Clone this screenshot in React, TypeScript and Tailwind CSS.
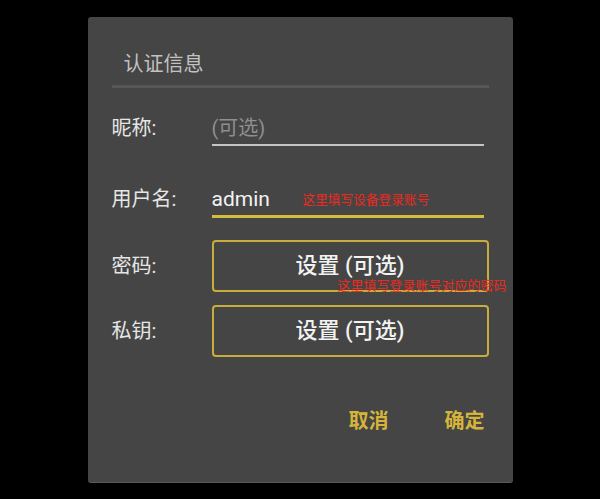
const cjk = { fontFamily: 'Roboto, "Noto Sans CJK SC", sans-serif' };

function Label({ children }: { children: string }) {
  return <div className="w-[100px] shrink-0 text-[20px] leading-[28px] text-[#e6e6e6]">{children}</div>;
}

function SetButton({ note }: { note?: string }) {
  return (
    <div className="relative w-[277px] h-[52px] rounded-[4px] border-2 border-[#c9ad3c] flex items-center justify-center">
      <span className="text-[22px] leading-[30px] text-[#f2f2f2] font-medium">设置 (可选)</span>
      {note && (
        <span className="absolute left-[124px] top-[35px] text-[13px] leading-[18px] text-[#ec2a1e] whitespace-nowrap">
          {note}
        </span>
      )}
    </div>
  );
}

export default function App() {
  return (
    <div className="w-[600px] h-[499px] bg-black flex items-center justify-center" style={cjk}>
      <div className="w-[425px] h-[466px] rounded-[3px] bg-[#454545] border-b border-[#5a5a5a] px-6 pt-[33px]">
        <div className="pl-3 text-[20px] leading-[28px] text-[#c2c2c2]">认证信息</div>
        <div className="mt-[7px] h-[3px] bg-[#575757]" />

        <div className="mt-[26px] flex items-start">
          <Label>昵称:</Label>
          <div className="flex flex-col">
            <div className="text-[20px] leading-[28px] text-[#8f8f8f]">(可选)</div>
            <div className="mt-[2px] w-[272px] h-[2px] bg-[#c4c4c4]" />
          </div>
        </div>

        <div className="mt-[39px] flex items-start">
          <Label>用户名:</Label>
          <div className="relative flex flex-col">
            <div className="text-[21px] leading-[28px] text-[#f2f2f2]">admin</div>
            <div className="mt-[2px] w-[272px] h-[3px] bg-[#d6bc3c]" />
            <span className="absolute left-[91px] top-[6px] text-[12.7px] leading-[18px] text-[#ec2a1e] whitespace-nowrap">
              这里填写设备登录账号
            </span>
          </div>
        </div>

        <div className="mt-[22px] flex items-center">
          <Label>密码:</Label>
          <SetButton note="这里填写登录账号对应的密码" />
        </div>

        <div className="mt-[13px] flex items-center">
          <Label>私钥:</Label>
          <SetButton />
        </div>

        <div className="mt-[50px] pr-1 flex justify-end gap-[56px] text-[20px] leading-[28px] font-bold text-[#d4b43a]">
          <span>取消</span>
          <span>确定</span>
        </div>
      </div>
    </div>
  );
}
